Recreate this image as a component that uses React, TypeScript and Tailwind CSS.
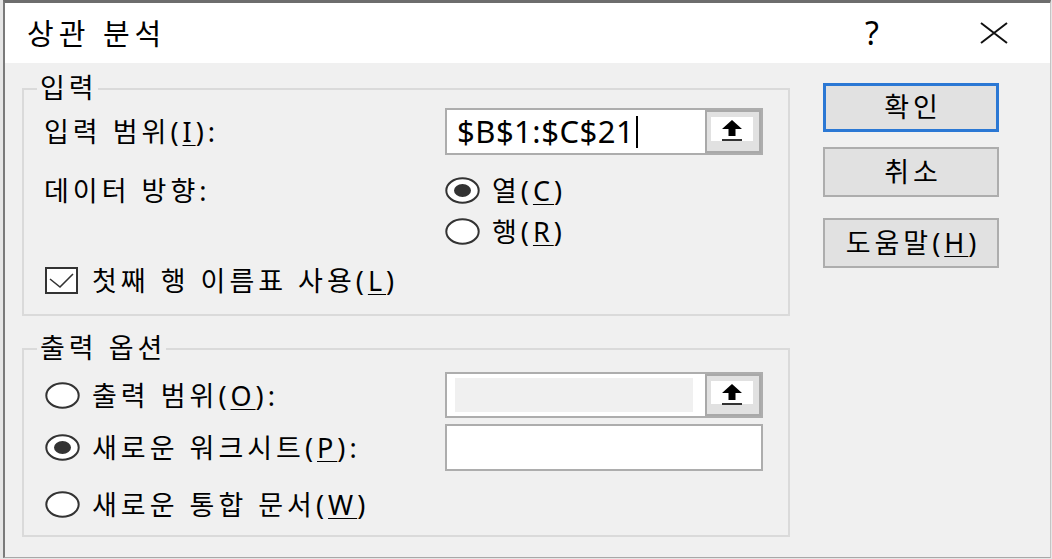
import React from "react";

function U({ c }: { c: string }) {
  return <span className="underline decoration-1 underline-offset-[3px]">{c}</span>;
}

function Radio({ checked }: { checked?: boolean }) {
  return (
    <svg width="35" height="27" viewBox="0 0 35 27" className="shrink-0">
      <ellipse cx="17.5" cy="13.5" rx="16.2" ry="12.2" fill="#fff" stroke="#333" strokeWidth="2" />
      {checked && <ellipse cx="17.5" cy="13.5" rx="8.5" ry="6.5" fill="#333" />}
    </svg>
  );
}

function Checkbox() {
  return (
    <svg width="33" height="27" viewBox="0 0 33 27" className="shrink-0">
      <rect x="1" y="1" width="31" height="25" fill="#fff" stroke="#333" strokeWidth="2" />
      <path d="M5 12 L15 20 L28 7" fill="none" stroke="#333" strokeWidth="1.6" />
    </svg>
  );
}

function PickButton() {
  return (
    <div className="h-full w-[56px] shrink-0 border-2 border-[#a9a9a9] bg-[#e1e1e1] pl-[4px] pr-[6px] pt-[5px] pb-[10px]">
      <div className="flex h-full items-start justify-center bg-white pt-[2px]">
        <svg width="22" height="24" viewBox="0 0 22 24">
          <path d="M11 1 L21 10 H14.5 V17 H7.5 V10 H1 Z" fill="#000" />
          <rect x="1" y="20" width="20" height="2" fill="#333" />
        </svg>
      </div>
    </div>
  );
}

function DialogButton({ children, primary }: { children: React.ReactNode; primary?: boolean }) {
  return (
    <div
      className={
        primary
          ? "flex h-[49px] items-center justify-center border-[3px] border-[#2b78d4] bg-[#e1e1e1] pl-[4px] text-[27px]"
          : "flex h-[50px] items-center justify-center border-2 border-[#adadad] bg-[#e1e1e1] pl-[4px] text-[27px]"
      }
    >
      {children}
    </div>
  );
}

export default function App() {
  return (
    <div className="h-[559px] w-[1052px] bg-[#e6e6e6] font-['Noto_Sans','Noto_Sans_CJK_KR',sans-serif] tracking-[4px] text-black">
      <div className="ml-[3px] flex h-[558px] w-[1048px] flex-col border-t-[3px] border-l-2 border-r border-b border-t-[#6d6d6d] border-l-[#7a7a7a] border-r-[#c4c4c4] border-b-[#a8a8a8] bg-[#f0f0f0]">
        {/* Title bar */}
        <div className="flex h-[60px] shrink-0 items-center bg-white pl-[22px]">
          <span className="text-[29px] leading-none tracking-[5px]">상관 분석</span>
          <span className="ml-auto mr-[100px] text-[32px] leading-none tracking-normal">?</span>
          <svg width="30" height="22" viewBox="0 0 30 22" className="mr-[41px]">
            <path d="M2 1 L28 21 M28 1 L2 21" stroke="#111" strokeWidth="2" />
          </svg>
        </div>

        {/* Body */}
        <div className="flex pl-[17px] pt-[25px]">
          <div className="w-[768px]">
            {/* 입력 */}
            <div className="relative h-[228px] border-2 border-[#dadada]">
              <span className="absolute -top-[17px] left-[13px] bg-[#f0f0f0] pl-[3px] text-[27px] leading-[30px]">입력</span>
              <div className="mt-[18px] flex h-[47px] items-center">
                <div className="w-[421px] pl-[20px] text-[27px] leading-none">
                  입력 범위(<U c="I" />):
                </div>
                <div className="flex h-full w-[318px] border-2 border-[#adadad] bg-white">
                  <div className="flex flex-1 items-center pl-[10px] text-[31px] leading-none tracking-[0.5px]">
                    $B$1:$C$21
                    <span className="ml-[2px] h-[32px] border-l-2 border-black" />
                  </div>
                  <PickButton />
                </div>
              </div>
              <div className="mt-[15px] flex">
                <div className="flex h-[41px] w-[421px] items-center pl-[20px] text-[27px] leading-none">
                  데이터 방향:
                </div>
                <div className="flex flex-col">
                  <div className="flex h-[41px] items-center gap-[12px] text-[27px] leading-none">
                    <Radio checked />
                    <span>
                      열(<U c="C" />)
                    </span>
                  </div>
                  <div className="flex h-[41px] items-center gap-[12px] text-[27px] leading-none">
                    <Radio />
                    <span>
                      행(<U c="R" />)
                    </span>
                  </div>
                </div>
              </div>
              <div className="mt-[8px] flex h-[41px] items-center gap-[14px] pl-[21px] text-[27px] leading-none">
                <Checkbox />
                <span>
                  첫째 행 이름표 사용(<U c="L" />)
                </span>
              </div>
            </div>

            {/* 출력 옵션 */}
            <div className="relative mt-[32px] h-[189px] border-2 border-[#dadada]">
              <span className="absolute -top-[17px] left-[13px] bg-[#f0f0f0] pl-[3px] text-[27px] leading-[30px]">출력 옵션</span>
              <div className="mt-[22px] flex h-[46px] items-center">
                <div className="flex w-[421px] items-center gap-[12px] pl-[21px] text-[27px] leading-none">
                  <Radio />
                  <span>
                    출력 범위(<U c="O" />):
                  </span>
                </div>
                <div className="flex h-full w-[318px] border-2 border-[#adadad] bg-white">
                  <div className="flex-1 py-[4px] pl-[8px] pr-[12px]">
                    <div className="h-full bg-[#f0f0f0]" />
                  </div>
                  <PickButton />
                </div>
              </div>
              <div className="mt-[6px] flex h-[47px] items-center">
                <div className="flex w-[421px] items-center gap-[12px] pl-[21px] text-[27px] leading-none">
                  <Radio checked />
                  <span>
                    새로운 워크시트(<U c="P" />):
                  </span>
                </div>
                <div className="h-full w-[318px] border-2 border-[#adadad] bg-white" />
              </div>
              <div className="mt-[10px] flex h-[47px] items-center gap-[12px] pl-[21px] text-[27px] leading-none">
                <Radio />
                <span>
                  새로운 통합 문서(<U c="W" />)
                </span>
              </div>
            </div>
          </div>

          {/* Buttons */}
          <div className="ml-[33px] mt-[-5px] flex w-[176px] flex-col">
            <DialogButton primary>확인</DialogButton>
            <div className="mt-[15px]">
              <DialogButton>취소</DialogButton>
            </div>
            <div className="mt-[21px]">
              <DialogButton>
                도움말(<U c="H" />)
              </DialogButton>
            </div>
          </div>
        </div>
      </div>
    </div>
  );
}
